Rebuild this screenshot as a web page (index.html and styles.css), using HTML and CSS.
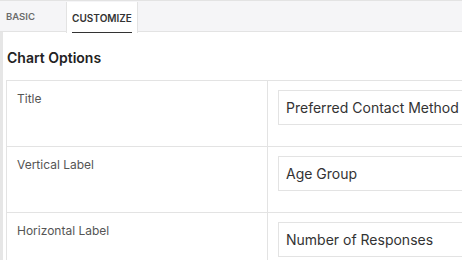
FILE: index.html
```html
<!DOCTYPE html>
<html lang="en">
<head>
    <meta charset="UTF-8">
    <meta name="viewport" content="width=device-width, initial-scale=1.0">
    <title>Chart Options</title>
    <link rel="stylesheet" href="styles.css">
</head>
<body>

    <div class="tabs">
        <div class="tab">BASIC</div>
        <div class="tab active"><span>CUSTOMIZE</span></div>
    </div>

    <div class="panel">
        <h3>Chart Options</h3>

        <div class="options">
            <div class="row">
                <div class="label">Title</div>
                <div class="field"><input type="text" value="Preferred Contact Method"></div>
            </div>
            <div class="row">
                <div class="label">Vertical Label</div>
                <div class="field"><input type="text" value="Age Group"></div>
            </div>
            <div class="row">
                <div class="label">Horizontal Label</div>
                <div class="field"><input type="text" value="Number of Responses"></div>
            </div>
        </div>
    </div>

</body>
</html>
```

FILE: styles.css
```css
* {
    margin: 0;
    padding: 0;
    box-sizing: border-box;
    font-family: Inter, "Noto Sans", sans-serif;
}

body {
    width: 462px;
    height: 261px;
    overflow: hidden;
    background-color: #ffffff;
}

.tabs {
    display: flex;
    height: 32px;
    background-color: #f5f5f7;
    border-top: 1px solid #e3e3e3;
    border-bottom: 1px solid #e3e3e3;
}

.tab {
    display: flex;
    align-items: center;
    padding: 0 6px;
    width: 66px;
    font-size: 9.5px;
    font-weight: 600;
    color: #6b6b6b;
}

.tab.active {
    width: 72px;
    height: 31px;
    margin-top: 1px;
    padding: 0;
    background-color: #ffffff;
    border-left: 1px solid #e3e3e3;
    border-right: 1px solid #e3e3e3;
    color: #333;
    justify-content: center;
    position: relative;
    z-index: 1;
    margin-bottom: -1px;
    font-size: 10px;
}

.tab.active span {
    height: 100%;
    display: flex;
    align-items: center;
    border-bottom: 1px solid #333;
    padding-top: 1px;
}

.panel {
    border-left: 3px solid #e6e6e6;
    padding: 17px 0 0 3px;
    height: 228px;
    overflow: hidden;
}

h3 {
    font-size: 14px;
    font-weight: 600;
    color: #222;
    margin-left: 1px;
    margin-bottom: 14px;
}

.options {
    width: 620px;
    border-top: 1px solid #e3e3e3;
    border-left: 1px solid #e3e3e3;
}

.row {
    display: grid;
    grid-template-columns: 261px 1fr;
    height: 66px;
    border-bottom: 1px solid #e3e3e3;
}

.label {
    padding: 10px 10px;
    font-size: 12px;
    color: #555;
    border-right: 1px solid #e3e3e3;
}

.field {
    padding: 9px 10px;
}

.field input {
    width: 100%;
    height: 35px;
    padding: 0 7px;
    border: 1px solid #e3e3e3;
    font-size: 14px;
    color: #333;
    outline: none;
}
```
